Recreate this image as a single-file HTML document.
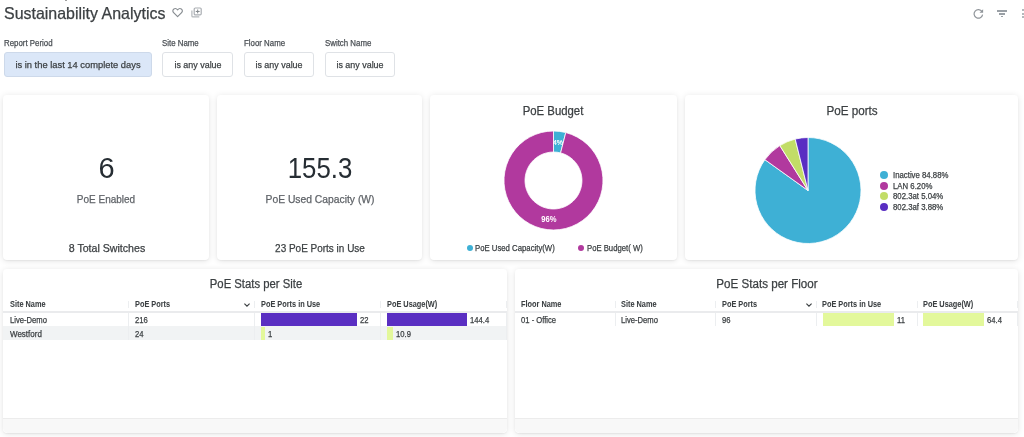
<!DOCTYPE html>
<html><head><meta charset="utf-8"><style>
html,body{margin:0;padding:0;background:#fff;width:1024px;height:437px;overflow:hidden;position:relative;font-family:"Liberation Sans",sans-serif}
.t{position:absolute;line-height:1;white-space:nowrap;-webkit-text-stroke:0.25px currentColor}
.r{position:absolute}
.card{position:absolute;background:#fff;border-radius:4px;box-shadow:0 1px 7px rgba(0,0,0,0.11),0 1px 2px rgba(0,0,0,0.06)}
#wrap{position:absolute;left:0;top:0;width:1024px;height:437px;filter:blur(0.35px)}
</style></head><body><div id="wrap">
<div class="t" style="left:3.60px;top:4.83px;font-size:16.5px;color:#3c4043;font-weight:normal;letter-spacing:0px;transform:scaleX(0.967);transform-origin:0 50%;">Sustainability Analytics</div>
<svg class="r" style="left:171px;top:6px" width="13" height="13" viewBox="0 0 13 13"><path d="M6.6 10.6 L2.6 6.7 C1.5 5.6 1.6 3.7 2.9 2.9 C4.1 2.2 5.6 2.6 6.6 3.8 C7.6 2.6 9.1 2.2 10.3 2.9 C11.6 3.7 11.7 5.6 10.6 6.7 Z" fill="none" stroke="#858a8f" stroke-width="1.15" stroke-linejoin="round"/></svg>
<svg class="r" style="left:190px;top:6px" width="13" height="13" viewBox="0 0 13 13"><path d="M1.9 4.6 V10.0 Q1.9 10.9 2.8 10.9 H9.3" fill="none" stroke="#b3b7bb" stroke-width="1.2"/><rect x="4.2" y="2.0" width="7.0" height="6.9" rx="1.1" fill="none" stroke="#a9adb2" stroke-width="1.2"/><path d="M7.7 3.5 V7.4 M5.75 5.45 H9.65" stroke="#80868b" stroke-width="1.0"/></svg>
<svg class="r" style="left:972px;top:7px" width="13" height="13" viewBox="0 0 13 13"><path d="M10.0 4.6 A4.3 4.3 0 1 0 10.6 7.6" fill="none" stroke="#8f9499" stroke-width="1.2"/><path d="M11.1 2.2 V5.8 H7.5 Z" fill="#8f9499"/></svg>
<div class="r" style="left:997px;top:10.3px;width:10.299999999999955px;height:1.5px;background:#9aa0a6;"></div>
<div class="r" style="left:999px;top:13.2px;width:6.399999999999977px;height:1.5px;background:#9aa0a6;"></div>
<div class="r" style="left:1000.9px;top:16px;width:2.5px;height:1.3000000000000007px;background:#9aa0a6;"></div>
<div class="r" style="left:1022.3px;top:9.200000000000001px;width:2.2px;height:2.2px;border-radius:50%;background:#9aa0a6"></div>
<div class="r" style="left:1022.3px;top:12.700000000000001px;width:2.2px;height:2.2px;border-radius:50%;background:#9aa0a6"></div>
<div class="r" style="left:1022.3px;top:16.2px;width:2.2px;height:2.2px;border-radius:50%;background:#9aa0a6"></div>
<div class="r" style="left:65.2px;top:0px;width:1.3999999999999915px;height:1.2px;background:#a0a0a0;"></div>
<div class="t" style="left:4.00px;top:38.52px;font-size:8.6px;color:#4a4f54;font-weight:normal;letter-spacing:0px;transform:scaleX(0.915);transform-origin:0 50%;">Report Period</div>
<div class="t" style="left:162.30px;top:38.52px;font-size:8.6px;color:#4a4f54;font-weight:normal;letter-spacing:0px;transform:scaleX(0.915);transform-origin:0 50%;">Site Name</div>
<div class="t" style="left:243.60px;top:38.52px;font-size:8.6px;color:#4a4f54;font-weight:normal;letter-spacing:0px;transform:scaleX(0.915);transform-origin:0 50%;">Floor Name</div>
<div class="t" style="left:324.60px;top:38.52px;font-size:8.6px;color:#4a4f54;font-weight:normal;letter-spacing:0px;transform:scaleX(0.915);transform-origin:0 50%;">Switch Name</div>
<div class="r" style="left:3.5px;top:52.3px;width:148.5px;height:24.3px;box-sizing:border-box;border:1px solid #cdd9ea;border-radius:3px;background:#dbe7f8"></div>
<div class="t" style="left:-222.40px;width:600px;text-align:center;top:60.00px;font-size:9.8px;color:#3c4043;font-weight:normal;letter-spacing:0px;transform:scaleX(0.954);transform-origin:50% 50%;">is in the last 14 complete days</div>
<div class="r" style="left:162px;top:52.3px;width:71px;height:24.3px;box-sizing:border-box;border:1px solid #dfe2e6;border-radius:3px;background:#fff"></div>
<div class="t" style="left:-102.50px;width:600px;text-align:center;top:60.20px;font-size:9.8px;color:#3c4043;font-weight:normal;letter-spacing:0px;transform:scaleX(0.910);transform-origin:50% 50%;">is any value</div>
<div class="r" style="left:243.5px;top:52.3px;width:70.0px;height:24.3px;box-sizing:border-box;border:1px solid #dfe2e6;border-radius:3px;background:#fff"></div>
<div class="t" style="left:-21.50px;width:600px;text-align:center;top:60.20px;font-size:9.8px;color:#3c4043;font-weight:normal;letter-spacing:0px;transform:scaleX(0.910);transform-origin:50% 50%;">is any value</div>
<div class="r" style="left:324.5px;top:52.3px;width:70.0px;height:24.3px;box-sizing:border-box;border:1px solid #dfe2e6;border-radius:3px;background:#fff"></div>
<div class="t" style="left:59.50px;width:600px;text-align:center;top:60.20px;font-size:9.8px;color:#3c4043;font-weight:normal;letter-spacing:0px;transform:scaleX(0.910);transform-origin:50% 50%;">is any value</div>
<div class="card" style="left:3px;top:95px;width:206px;height:164.8px"></div>
<div class="card" style="left:217px;top:95px;width:205px;height:164.8px"></div>
<div class="card" style="left:430px;top:95px;width:247px;height:164.8px"></div>
<div class="card" style="left:685px;top:95px;width:333px;height:164.8px"></div>
<div class="card" style="left:3px;top:268.5px;width:504px;height:164.0px"></div>
<div class="card" style="left:515px;top:268.5px;width:503px;height:164.0px"></div>
<div class="t" style="left:-193.35px;width:600px;text-align:center;top:154.45px;font-size:29px;color:#262d33;font-weight:normal;letter-spacing:0px;-webkit-text-stroke:0;">6</div>
<div class="t" style="left:-193.80px;width:600px;text-align:center;top:194.06px;font-size:10.8px;color:#5f6368;font-weight:normal;letter-spacing:0px;transform:scaleX(0.925);transform-origin:50% 50%;">PoE Enabled</div>
<div class="t" style="left:-193.50px;width:600px;text-align:center;top:243.09px;font-size:11px;color:#3c4043;font-weight:normal;letter-spacing:0px;transform:scaleX(0.965);transform-origin:50% 50%;">8 Total Switches</div>
<div class="t" style="left:19.85px;width:600px;text-align:center;top:154.45px;font-size:29px;color:#262d33;font-weight:normal;letter-spacing:0px;-webkit-text-stroke:0;transform:scaleX(0.890);transform-origin:50% 50%;">155.3</div>
<div class="t" style="left:19.50px;width:600px;text-align:center;top:194.06px;font-size:10.8px;color:#5f6368;font-weight:normal;letter-spacing:0px;transform:scaleX(0.956);transform-origin:50% 50%;">PoE Used Capacity (W)</div>
<div class="t" style="left:19.50px;width:600px;text-align:center;top:242.66px;font-size:10.8px;color:#3c4043;font-weight:normal;letter-spacing:0px;transform:scaleX(0.923);transform-origin:50% 50%;">23 PoE Ports in Use</div>
<div class="t" style="left:253.20px;width:600px;text-align:center;top:104.74px;font-size:12px;color:#3c4043;font-weight:normal;letter-spacing:0px;transform:scaleX(0.947);transform-origin:50% 50%;">PoE Budget</div>
<svg class="r" style="left:0;top:0" width="1024" height="437"><path d="M553.50 131.00 A49.5 49.5 0 0 1 565.81 132.56 L560.59 152.90 A28.5 28.5 0 0 0 553.50 152.00 Z" fill="#3eb0d5" stroke="#fff" stroke-width="0.8" stroke-linejoin="round"/><path d="M565.81 132.56 A49.5 49.5 0 1 1 553.50 131.00 L553.50 152.00 A28.5 28.5 0 1 0 560.59 152.90 Z" fill="#b1399e" stroke="#fff" stroke-width="0.8" stroke-linejoin="round"/><path d="M808 190.5 L808.00 137.50 A53 53 0 1 1 764.89 159.67 Z" fill="#3eb0d5" stroke="#fff" stroke-width="0.8" stroke-linejoin="round"/><path d="M808 190.5 L764.89 159.67 A53 53 0 0 1 779.83 145.61 Z" fill="#b1399e" stroke="#fff" stroke-width="0.8" stroke-linejoin="round"/><path d="M808 190.5 L779.83 145.61 A53 53 0 0 1 795.21 139.07 Z" fill="#c2dd67" stroke="#fff" stroke-width="0.8" stroke-linejoin="round"/><path d="M808 190.5 L795.21 139.07 A53 53 0 0 1 808.00 137.50 Z" fill="#592ec2" stroke="#fff" stroke-width="0.8" stroke-linejoin="round"/></svg>
<div class="t" style="left:258.30px;width:600px;text-align:center;top:138.87px;font-size:7.6px;color:#fff;font-weight:normal;letter-spacing:0px;transform:scaleX(0.920);transform-origin:50% 50%;-webkit-text-stroke:0.2px #fff;">4%</div>
<div class="t" style="left:248.60px;width:600px;text-align:center;top:216.36px;font-size:8.2px;color:#fff;font-weight:bold;letter-spacing:0px;transform:scaleX(0.930);transform-origin:50% 50%;-webkit-text-stroke:0;">96%</div>
<div class="r" style="left:466.5px;top:244.6px;width:6px;height:6px;border-radius:50%;background:#3eb0d5"></div>
<div class="t" style="left:475.00px;top:243.98px;font-size:9px;color:#3c4043;font-weight:normal;letter-spacing:0px;transform:scaleX(0.862);transform-origin:0 50%;">PoE Used Capacity(W)</div>
<div class="r" style="left:578px;top:244.6px;width:6px;height:6px;border-radius:50%;background:#b1399e"></div>
<div class="t" style="left:586.50px;top:243.98px;font-size:9px;color:#3c4043;font-weight:normal;letter-spacing:0px;transform:scaleX(0.857);transform-origin:0 50%;">PoE Budget( W)</div>
<div class="t" style="left:552.10px;width:600px;text-align:center;top:104.74px;font-size:12px;color:#3c4043;font-weight:normal;letter-spacing:0px;transform:scaleX(0.972);transform-origin:50% 50%;">PoE ports</div>
<div class="r" style="left:880px;top:171.30px;width:8px;height:8px;border-radius:50%;background:#3eb0d5"></div>
<div class="t" style="left:892.60px;top:171.45px;font-size:8.8px;color:#3c4043;font-weight:normal;letter-spacing:0px;transform:scaleX(0.885);transform-origin:0 50%;">Inactive 84.88%</div>
<div class="r" style="left:880px;top:181.80px;width:8px;height:8px;border-radius:50%;background:#b1399e"></div>
<div class="t" style="left:892.60px;top:181.95px;font-size:8.8px;color:#3c4043;font-weight:normal;letter-spacing:0px;transform:scaleX(0.885);transform-origin:0 50%;">LAN 6.20%</div>
<div class="r" style="left:880px;top:192.30px;width:8px;height:8px;border-radius:50%;background:#c2dd67"></div>
<div class="t" style="left:892.60px;top:192.45px;font-size:8.8px;color:#3c4043;font-weight:normal;letter-spacing:0px;transform:scaleX(0.885);transform-origin:0 50%;">802.3at 5.04%</div>
<div class="r" style="left:880px;top:202.80px;width:8px;height:8px;border-radius:50%;background:#592ec2"></div>
<div class="t" style="left:892.60px;top:202.95px;font-size:8.8px;color:#3c4043;font-weight:normal;letter-spacing:0px;transform:scaleX(0.885);transform-origin:0 50%;">802.3af 3.88%</div>
<div class="t" style="left:-44.40px;width:600px;text-align:center;top:278.24px;font-size:12px;color:#3c4043;font-weight:normal;letter-spacing:0px;transform:scaleX(0.942);transform-origin:50% 50%;">PoE Stats per Site</div>
<div class="t" style="left:467.20px;width:600px;text-align:center;top:278.24px;font-size:12px;color:#3c4043;font-weight:normal;letter-spacing:0px;transform:scaleX(0.967);transform-origin:50% 50%;">PoE Stats per Floor</div>
<div class="r" style="left:3px;top:311px;width:504px;height:2px;background:#eaebed;"></div>
<div class="r" style="left:3px;top:326px;width:504px;height:14px;background:#f1f3f4;"></div>
<div class="r" style="left:128.0px;top:300.5px;width:1.0px;height:7.0px;background:#eceef0;"></div>
<div class="r" style="left:128.0px;top:313px;width:1.0px;height:26.600000000000023px;background:#eceef0;"></div>
<div class="r" style="left:254.0px;top:300.5px;width:1.0px;height:7.0px;background:#eceef0;"></div>
<div class="r" style="left:254.0px;top:313px;width:1.0px;height:26.600000000000023px;background:#eceef0;"></div>
<div class="r" style="left:379.9px;top:300.5px;width:1.0px;height:7.0px;background:#eceef0;"></div>
<div class="r" style="left:379.9px;top:313px;width:1.0px;height:26.600000000000023px;background:#eceef0;"></div>
<div class="r" style="left:506.0px;top:300.5px;width:1.0px;height:7.0px;background:#eceef0;"></div>
<div class="r" style="left:506.0px;top:313px;width:1.0px;height:26.600000000000023px;background:#eceef0;"></div>
<div class="r" style="left:244px;top:0px;width:0px;height:0px;background:#000;"></div>
<div class="r" style="left:515px;top:311px;width:503px;height:2px;background:#eaebed;"></div>
<div class="r" style="left:614.6px;top:300.5px;width:1.0px;height:7.0px;background:#eceef0;"></div>
<div class="r" style="left:614.6px;top:313px;width:1.0px;height:13.300000000000011px;background:#eceef0;"></div>
<div class="r" style="left:715.2px;top:300.5px;width:1.0px;height:7.0px;background:#eceef0;"></div>
<div class="r" style="left:715.2px;top:313px;width:1.0px;height:13.300000000000011px;background:#eceef0;"></div>
<div class="r" style="left:816.1px;top:300.5px;width:1.0px;height:7.0px;background:#eceef0;"></div>
<div class="r" style="left:816.1px;top:313px;width:1.0px;height:13.300000000000011px;background:#eceef0;"></div>
<div class="r" style="left:916.7px;top:300.5px;width:1.0px;height:7.0px;background:#eceef0;"></div>
<div class="r" style="left:916.7px;top:313px;width:1.0px;height:13.300000000000011px;background:#eceef0;"></div>
<div class="r" style="left:1017.0px;top:300.5px;width:1.0px;height:7.0px;background:#eceef0;"></div>
<div class="r" style="left:1017.0px;top:313px;width:1.0px;height:13.300000000000011px;background:#eceef0;"></div>
<div class="r" style="left:805px;top:0px;width:0px;height:0px;background:#000;"></div>
<div class="t" style="left:9.50px;top:300.22px;font-size:8.6px;color:#3c4043;font-weight:bold;letter-spacing:0px;transform:scaleX(0.855);transform-origin:0 50%;-webkit-text-stroke:0.05px currentColor;">Site Name</div>
<div class="t" style="left:134.60px;top:300.22px;font-size:8.6px;color:#3c4043;font-weight:bold;letter-spacing:0px;transform:scaleX(0.855);transform-origin:0 50%;-webkit-text-stroke:0.05px currentColor;">PoE Ports</div>
<div class="t" style="left:260.60px;top:300.22px;font-size:8.6px;color:#3c4043;font-weight:bold;letter-spacing:0px;transform:scaleX(0.855);transform-origin:0 50%;-webkit-text-stroke:0.05px currentColor;">PoE Ports in Use</div>
<div class="t" style="left:386.50px;top:300.22px;font-size:8.6px;color:#3c4043;font-weight:bold;letter-spacing:0px;transform:scaleX(0.855);transform-origin:0 50%;-webkit-text-stroke:0.05px currentColor;">PoE Usage(W)</div>
<div class="t" style="left:520.80px;top:300.22px;font-size:8.6px;color:#3c4043;font-weight:bold;letter-spacing:0px;transform:scaleX(0.855);transform-origin:0 50%;-webkit-text-stroke:0.05px currentColor;">Floor Name</div>
<div class="t" style="left:621.00px;top:300.22px;font-size:8.6px;color:#3c4043;font-weight:bold;letter-spacing:0px;transform:scaleX(0.855);transform-origin:0 50%;-webkit-text-stroke:0.05px currentColor;">Site Name</div>
<div class="t" style="left:721.80px;top:300.22px;font-size:8.6px;color:#3c4043;font-weight:bold;letter-spacing:0px;transform:scaleX(0.855);transform-origin:0 50%;-webkit-text-stroke:0.05px currentColor;">PoE Ports</div>
<div class="t" style="left:822.40px;top:300.22px;font-size:8.6px;color:#3c4043;font-weight:bold;letter-spacing:0px;transform:scaleX(0.855);transform-origin:0 50%;-webkit-text-stroke:0.05px currentColor;">PoE Ports in Use</div>
<div class="t" style="left:923.00px;top:300.22px;font-size:8.6px;color:#3c4043;font-weight:bold;letter-spacing:0px;transform:scaleX(0.855);transform-origin:0 50%;-webkit-text-stroke:0.05px currentColor;">PoE Usage(W)</div>
<svg class="r" style="left:242.9px;top:300.6px" width="8" height="8" viewBox="0 0 8 8"><path d="M1.4 2.6 L4 5.1 L6.6 2.6" fill="none" stroke="#3c4043" stroke-width="1.15"/></svg>
<svg class="r" style="left:804.8px;top:300.6px" width="8" height="8" viewBox="0 0 8 8"><path d="M1.4 2.6 L4 5.1 L6.6 2.6" fill="none" stroke="#3c4043" stroke-width="1.15"/></svg>
<div class="t" style="left:9.60px;top:315.94px;font-size:8.7px;color:#3c4043;font-weight:normal;letter-spacing:0px;transform:scaleX(0.880);transform-origin:0 50%;">Live-Demo</div>
<div class="t" style="left:134.60px;top:315.94px;font-size:8.7px;color:#3c4043;font-weight:normal;letter-spacing:0px;transform:scaleX(0.880);transform-origin:0 50%;">216</div>
<div class="t" style="left:9.70px;top:329.74px;font-size:8.7px;color:#3c4043;font-weight:normal;letter-spacing:0px;transform:scaleX(0.920);transform-origin:0 50%;">Westford</div>
<div class="t" style="left:134.60px;top:329.74px;font-size:8.7px;color:#3c4043;font-weight:normal;letter-spacing:0px;transform:scaleX(0.880);transform-origin:0 50%;">24</div>
<div class="r" style="left:261px;top:313px;width:96.39999999999998px;height:12.699999999999989px;background:#5a2fc2;"></div>
<div class="t" style="left:360.00px;top:315.94px;font-size:8.7px;color:#3c4043;font-weight:normal;letter-spacing:0px;transform:scaleX(0.880);transform-origin:0 50%;">22</div>
<div class="r" style="left:261px;top:327px;width:4.100000000000023px;height:12.600000000000023px;background:#e3f89b;"></div>
<div class="t" style="left:268.30px;top:329.74px;font-size:8.7px;color:#3c4043;font-weight:normal;letter-spacing:0px;transform:scaleX(0.880);transform-origin:0 50%;">1</div>
<div class="r" style="left:386.8px;top:313px;width:80.0px;height:12.699999999999989px;background:#5a2fc2;"></div>
<div class="t" style="left:470.20px;top:315.94px;font-size:8.7px;color:#3c4043;font-weight:normal;letter-spacing:0px;transform:scaleX(0.880);transform-origin:0 50%;">144.4</div>
<div class="r" style="left:386.8px;top:327px;width:6.199999999999989px;height:12.600000000000023px;background:#e3f89b;"></div>
<div class="t" style="left:396.10px;top:329.74px;font-size:8.7px;color:#3c4043;font-weight:normal;letter-spacing:0px;transform:scaleX(0.880);transform-origin:0 50%;">10.9</div>
<div class="t" style="left:520.80px;top:315.94px;font-size:8.7px;color:#3c4043;font-weight:normal;letter-spacing:0px;transform:scaleX(0.880);transform-origin:0 50%;">01 - Office</div>
<div class="t" style="left:621.00px;top:315.94px;font-size:8.7px;color:#3c4043;font-weight:normal;letter-spacing:0px;transform:scaleX(0.880);transform-origin:0 50%;">Live-Demo</div>
<div class="t" style="left:721.80px;top:315.94px;font-size:8.7px;color:#3c4043;font-weight:normal;letter-spacing:0px;transform:scaleX(0.880);transform-origin:0 50%;">96</div>
<div class="r" style="left:822.7px;top:313px;width:71.09999999999991px;height:12.699999999999989px;background:#e3f89b;"></div>
<div class="t" style="left:896.70px;top:315.94px;font-size:8.7px;color:#3c4043;font-weight:normal;letter-spacing:0px;transform:scaleX(0.880);transform-origin:0 50%;">11</div>
<div class="r" style="left:923.3px;top:313px;width:60.700000000000045px;height:12.699999999999989px;background:#e3f89b;"></div>
<div class="t" style="left:986.60px;top:315.94px;font-size:8.7px;color:#3c4043;font-weight:normal;letter-spacing:0px;transform:scaleX(0.880);transform-origin:0 50%;">64.4</div>
<div class="r" style="left:3px;top:418px;width:504px;height:14.5px;background:#f8f8f8;border-top:1px solid #ececec;box-sizing:border-box;border-radius:0 0 5px 5px"></div>
<div class="r" style="left:515px;top:418px;width:503px;height:14.5px;background:#f8f8f8;border-top:1px solid #ececec;box-sizing:border-box;border-radius:0 0 5px 5px"></div>
</div></body></html>
